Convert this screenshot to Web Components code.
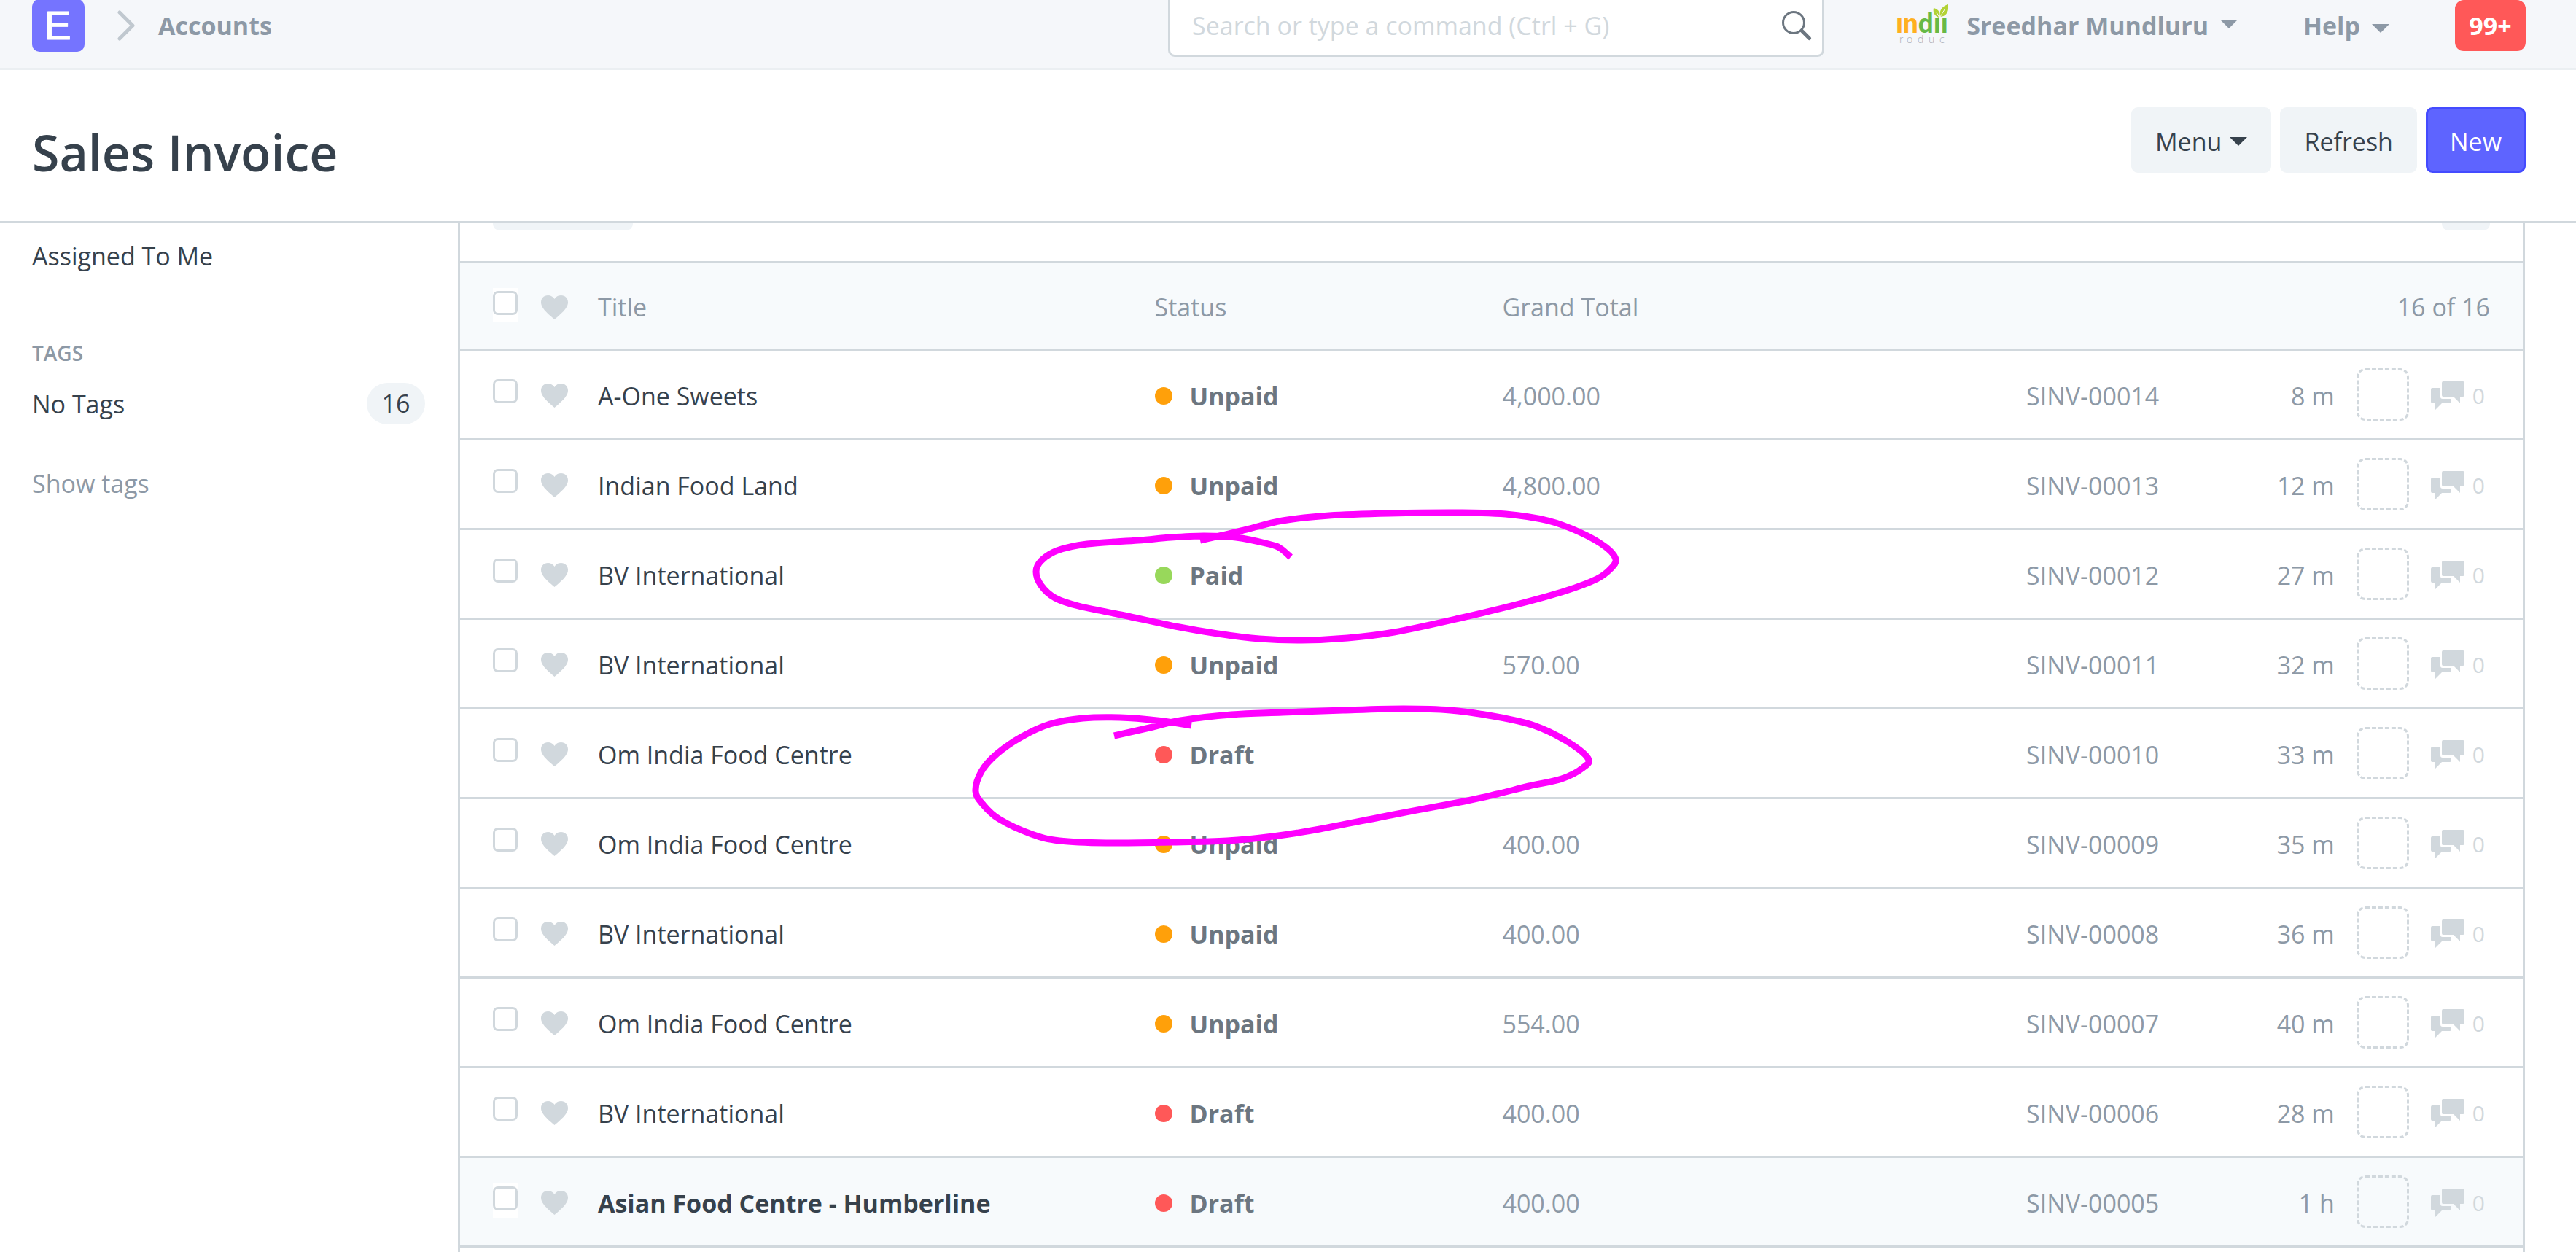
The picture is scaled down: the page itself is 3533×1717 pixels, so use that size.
<!DOCTYPE html>
<html lang="en">
<head>
<meta charset="utf-8">
<title>Sales Invoice</title>
<style>
  body { margin: 0; background: #fff; color: #36414c; font-family: "Open Sans", "Noto Sans", sans-serif; font-size: 34px; line-height: 48px; }
</style>
</head>
<body>
<invoice-desk>
  <desk-navbar slot="nav"></desk-navbar>
  <page-head slot="head">Sales Invoice</page-head>
  <list-sidebar slot="side"></list-sidebar>
  <invoice-list slot="list"></invoice-list>
  <ink-marks slot="marks"></ink-marks>
</invoice-desk>
<script>
const define = (name, html, setup) => customElements.define(name, class extends HTMLElement {
  connectedCallback() {
    if (this.shadowRoot) return;
    const root = this.attachShadow({ mode: "open" });
    root.innerHTML = "<style>:host,*{box-sizing:border-box}</style>" + html;
    if (setup) setup(this, root);
  }
});

define("caret-icon", `
<style>:host{display:block;width:24px;height:12px;flex:none} svg{display:block}</style>
<svg width="24" height="12" viewBox="0 0 24 12" fill="currentColor"><path d="M0 0h24L12 12z"/></svg>`);

define("heart-icon", `
<style>:host{display:block;width:37px;height:33px;flex:none;color:#d1d8dd} svg{display:block}</style>
<svg width="37" height="33" viewBox="0 0 37 33" fill="currentColor"><path d="M18.500 33C14 29 7 23.500 3.500 18.500C1 15 0 12.500 0 9.500C0 4 4 0 9.500 0C13.500 0 16.800 2 18.500 5C20.200 2 23.500 0 27.500 0C33 0 37 4 37 9.500C37 12.500 36 15 33.500 18.500C30 23.500 23 29 18.500 33z"/></svg>`);

define("comments-icon", `
<style>:host{display:block;width:46px;height:39px;flex:none} svg{display:block}</style>
<svg width="46" height="39" viewBox="0 0 46 39" fill="currentColor">
<path d="M17 0H44Q46 0 46 2V19Q46 21 44 21H40V30L31 21H17Q15 21 15 19V2Q15 0 17 0z"/>
<path d="M2 9H13V21Q13 24 16 24H28V28Q28 30 26 30H15L6 39V30H2Q0 30 0 28V11Q0 9 2 9z"/></svg>`);

define("tick-box", `
<style>
:host{display:block;flex:none}
label{display:block;background:#fff;padding:4px 1px 10px 0;height:47px}
input{appearance:none;display:block;margin:0;width:34px;height:33px;border:3px solid #d1d8dd;border-radius:7px;background:#fff}
</style>
<label><input type="checkbox"></label>`, (el, root) => root.querySelector("input").setAttribute("aria-label", el.getAttribute("label")));

define("status-pill", `
<style>
:host{display:flex;align-items:center;gap:24px;font-weight:700;color:#6c7680}
:host::before{content:"";width:24px;height:24px;border-radius:50%;background:var(--dot)}
:host([state=Unpaid]){--dot:#ffa00a} :host([state=Paid]){--dot:#98d85b} :host([state=Draft]){--dot:#ff5858}
</style><slot></slot>`);

define("desk-button", `
<style>
:host{display:block}
button{display:flex;align-items:center;gap:11px;height:90px;padding:3px 30px 0;border:3px solid #f0f4f7;border-radius:9px;background:#f0f4f7;color:#36414c;font:inherit}
:host([primary]) button{background:#5e64ff;border-color:#444bff;color:#fff}
</style>
<button type="button"><slot></slot></button>`);

define("desk-navbar", `
<style>
:host{display:block;margin-top:-24px;background:#f5f7fa;border-bottom:3px solid #ebeff2;color:#8d99a6;font-weight:700}
nav{height:117px;display:flex;align-items:center;padding:0 69px 0 44px}
a{color:inherit;text-decoration:none}
svg{display:block}
.crumbs{display:flex;align-items:center;flex:1}
.crumbs a:last-child{margin-left:31px}
.chev{margin-left:45px}
.search{position:relative;width:900px}
input{display:block;width:100%;height:87px;border:3px solid #d1d8dd;border-radius:9px;background:#fff;padding:0 90px 0 30px;font:inherit;font-weight:400;color:#36414c;outline:0}
input::placeholder{color:#d1d8dd;opacity:1}
.search svg{position:absolute;right:17px;top:23px}
.right{width:962px;display:flex;align-items:center;justify-content:flex-end}
.user,.help{display:flex;align-items:center}
.user span{margin:0 16px 0 25px}
.user caret-icon{margin-bottom:3px}
.help{margin:0 90px}
.help caret-icon{margin:9px 0 0 16px}
.count{width:97px;height:70px;padding:0;border:0;border-radius:12px;background:#ff5858;color:#fff;font:inherit;text-align:center}
</style>
<nav>
  <div class="crumbs">
    <a href="#"><svg width="72" height="72" viewBox="0 0 72 72"><rect width="72" height="72" rx="10" fill="#7574ff"/><text x="17" y="55" font-family="Liberation Sans, sans-serif" font-weight="400" font-size="55" fill="#fff" stroke="#fff" stroke-width="1" stroke-linejoin="round">E</text></svg></a>
    <svg class="chev" width="25" height="42" viewBox="0 0 25 42" fill="none" stroke="#c0c8cf" stroke-width="5" stroke-linecap="round" stroke-linejoin="round"><path d="M3 3L21 21L3 39"/></svg>
    <a href="#">Accounts</a>
  </div>
  <div class="search">
    <input type="text" placeholder="Search or type a command (Ctrl + G)" aria-label="Search">
    <svg width="42" height="42" viewBox="0 0 42 42" fill="none" stroke="#6c7680"><circle cx="17" cy="17" r="14.500" stroke-width="3"/><path d="M28 28L38.500 38.500" stroke-width="5" stroke-linecap="round"/></svg>
  </div>
  <div class="right">
    <a class="user" href="#">
      <svg width="72" height="72" viewBox="0 0 72 72">
        <text x="0" y="46" font-family="Roboto, sans-serif" font-weight="700" font-size="37"><tspan fill="#ffb01f">ın</tspan><tspan fill="#67b946">dıı</tspan></text>
        <path d="M59 25C52 22 51 17 52 12C59 14 62 18 59 25zM61 24C59 14 65 9 72 7C73 17 70 23 61 24z" fill="#b2d235"/>
        <path d="M60 25L56 18M61 24L67 14" stroke="#f5f7fa" fill="none"/>
        <text y="60" x="5 15 30 45 60" font-family="Open Sans, sans-serif" font-weight="300" font-size="14" fill="#a9adb5">roduc</text>
      </svg>
      <span>Sreedhar Mundluru</span><caret-icon></caret-icon>
    </a>
    <a class="help" href="#">Help<caret-icon></caret-icon></a>
    <button class="count" type="button">99+</button>
  </div>
</nav>`);

define("page-head", `
<style>
:host{display:block;border-bottom:3px solid #d1d8dd}
header{display:flex;justify-content:space-between;align-items:flex-start;height:207px;padding:51px 69px 0 44px}
h1{margin:0;font-size:68px;line-height:123px;font-weight:600}
.actions{display:flex;gap:12px}
</style>
<header><h1><slot></slot></h1>
<div class="actions"><desk-button>Menu<caret-icon></caret-icon></desk-button><desk-button>Refresh</desk-button><desk-button primary>New</desk-button></div></header>`);

define("list-sidebar", `
<style>
:host{display:block;padding:21px 45px 0 0}
a{display:block;color:inherit;text-decoration:none}
h2{margin:88px 0 20px;font-size:28px;line-height:42px;font-weight:600;color:#8d99a6}
.tag{display:flex;justify-content:space-between;align-items:center}
.badge{width:80px;border-radius:29px;background:#f0f4f7;line-height:57px;text-align:center}
.more{margin-top:57px;color:#8d99a6}
</style>
<a href="#">Assigned To Me</a>
<h2>TAGS</h2>
<a class="tag" href="#">No Tags<span class="badge">16</span></a>
<a class="more" href="#">Show tags</a>`);

const rows = [
  ["A-One Sweets", "Unpaid", "4,000.00", "SINV-00014", "8 m"],
  ["Indian Food Land", "Unpaid", "4,800.00", "SINV-00013", "12 m"],
  ["BV International", "Paid", "", "SINV-00012", "27 m"],
  ["BV International", "Unpaid", "570.00", "SINV-00011", "32 m"],
  ["Om India Food Centre", "Draft", "", "SINV-00010", "33 m"],
  ["Om India Food Centre", "Unpaid", "400.00", "SINV-00009", "35 m"],
  ["BV International", "Unpaid", "400.00", "SINV-00008", "36 m"],
  ["Om India Food Centre", "Unpaid", "554.00", "SINV-00007", "40 m"],
  ["BV International", "Draft", "400.00", "SINV-00006", "28 m"],
  ["Asian Food Centre - Humberline", "Draft", "400.00", "SINV-00005", "1 h", "unseen"]
];

define("invoice-list", `
<style>
:host{display:block;border:solid #d1d8dd;border-width:0 3px}
.filters{display:flex;justify-content:space-between;align-items:flex-end;height:55px;padding:0 45px 42px;overflow:hidden;border-bottom:3px solid #d1d8dd}
.filters button{flex:none;width:192px;height:66px;border:0;border-radius:9px;background:#f0f4f7}
.filters button:last-child{width:66px}
table{width:100%;table-layout:fixed;border-collapse:separate;border-spacing:0}
.c1{width:33.67%}.c2{width:16.86%}.c3{width:25.4%}
th,td{height:123px;padding:0;border-bottom:3px solid #d1d8dd;text-align:left;font-weight:400;color:#8d99a6;white-space:nowrap;vertical-align:middle}
th{height:120px}
thead,.unseen{background:#f7fafc}
.lead,.tail{display:flex;align-items:center}
.lead{padding-left:45px;color:#36414c}
th .lead{color:#8d99a6}
tick-box{margin-bottom:3px}
heart-icon{margin:3px 41px 0 31px}
b{font-weight:400} .unseen .lead b{font-weight:700}
b,.num,.id,.time,th>span,status-pill{padding-top:3px}
th>span,.num{display:block}
.tail{padding-right:45px}
.time{margin-left:auto}
.who{width:72px;height:72px;margin:0 30px;border:3px dashed #d1d8dd;border-radius:12px;flex:none}
.talk{display:flex;align-items:center;gap:11px;padding:3px 7px 0 0;color:#d1d8dd;font-size:30px}
.of{text-align:right;padding-right:45px}
</style>
<div class="filters"><button type="button" aria-label="Add filter"></button><button type="button" aria-label="Sort"></button></div>
<table>
<colgroup><col class="c1"><col class="c2"><col class="c3"><col></colgroup>
<thead><tr><th><div class="lead"><tick-box label="Select all"></tick-box><heart-icon></heart-icon><b>Title</b></div></th><th><span>Status</span></th><th><span>Grand Total</span></th><th><span class="of">16 of 16</span></th></tr></thead>
<tbody></tbody></table>`, (el, root) => {
  root.querySelector("tbody").innerHTML = rows.map(([title, state, total, id, age, cls = ""]) => `
<tr class="${cls}"><td><div class="lead"><tick-box label="Select ${id}"></tick-box><heart-icon></heart-icon><b>${title}</b></div></td>
<td><status-pill state="${state}">${state}</status-pill></td><td><span class="num">${total}</span></td>
<td><div class="tail"><span class="id">${id}</span><span class="time">${age}</span><span class="who"></span><span class="talk"><comments-icon></comments-icon>0</span></div></td></tr>`).join("");
});

const strokes = [
  [[1646,741],[1702,728],[1759,714],[1823,707],[1906,704],[2001,703],[2065,705],[2123,714],[2167,730],[2202,750],[2216,767],[2209,780],[2190,794],[2148,810],[2084,828],[2001,848],[1912,867],[1848,875],[1785,878],[1727,876],[1670,869],[1612,859],[1542,844],[1479,831],[1447,820],[1428,803],[1421,784],[1428,769],[1450,755],[1491,746],[1561,741],[1606,737],[1651,735],[1695,737],[1740,746],[1756,752],[1770,764]],
  [[1528,1009],[1581,997],[1619,988],[1689,980],[1759,977],[1842,974],[1925,972],[1989,974],[2053,983],[2104,995],[2148,1016],[2178,1040],[2171,1053],[2142,1068],[2097,1078],[2053,1089],[2008,1099],[1912,1117],[1810,1137],[1746,1147],[1683,1153],[1606,1155],[1517,1156],[1453,1153],[1415,1144],[1370,1123],[1348,1103],[1338,1085],[1346,1058],[1367,1034],[1402,1010],[1440,993],[1485,985],[1536,984],[1587,988],[1634,995]]
];

/* Catmull-Rom spline through the pen points */
const spline = p => p.slice(1).reduce((d, b, i) => {
  const a = p[i], z = p[i - 1] || a, c = p[i + 2] || b;
  return d + `C${a[0] + (b[0] - z[0]) / 6} ${a[1] + (b[1] - z[1]) / 6} ${b[0] - (c[0] - a[0]) / 6} ${b[1] - (c[1] - a[1]) / 6} ${b[0]} ${b[1]}`;
}, "M" + p[0]);

define("ink-marks", `
<style>:host{position:absolute;left:0;top:0;pointer-events:none} svg{display:block}</style>
<svg width="2300" height="1200" fill="none" stroke="#f0f" stroke-width="9" stroke-linejoin="round"></svg>`, (el, root) => {
  root.querySelector("svg").innerHTML = strokes.map(s => `<path d="${spline(s)}"/>`).join("");
});

define("invoice-desk", `
<style>
:host{display:flex;flex-direction:column;position:relative;height:100vh;overflow:hidden}
main{display:grid;grid-template-columns:minmax(0,584fr) minmax(0,2835fr);flex:1;min-height:0;padding:0 70px 0 44px}
</style>
<slot name="nav"></slot><slot name="head"></slot>
<main><slot name="side"></slot><slot name="list"></slot></main>
<slot name="marks"></slot>`);
</script>
</body>
</html>
